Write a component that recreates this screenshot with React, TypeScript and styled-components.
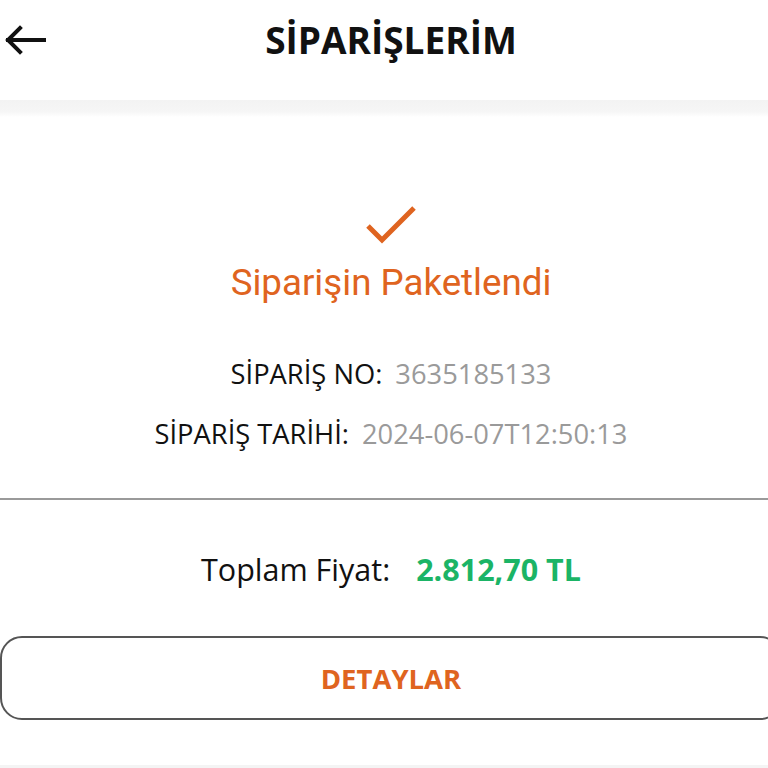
import React from "react";
import styled, { createGlobalStyle } from "styled-components";

const GlobalStyle = createGlobalStyle`
	html, body {
		margin: 0;
		padding: 0;
		background: #ffffff;
		overflow: hidden;
	}
	body {
		font-family: "Open Sans", "Liberation Sans", sans-serif;
		color: #111111;
	}
`;

const Page = styled.div`
	width: 768px;
	height: 768px;
	display: flex;
	flex-direction: column;
	background: #ffffff;
	overflow: hidden;
`;

const Header = styled.header`
	box-sizing: border-box;
	height: 100px;
	padding-bottom: 20px;
	display: grid;
	grid-template-columns: 60px 1fr 46px;
	align-items: center;
	background: #ffffff;
`;

const BackButton = styled.button`
	border: none;
	background: none;
	padding: 0 0 0 4px;
	height: 40px;
	display: flex;
	align-items: center;
	cursor: pointer;
	color: #111111;
`;

const Title = styled.h1`
	margin: 0;
	text-align: center;
	font-family: "Open Sans", sans-serif;
	font-weight: 700;
	font-size: 37px;
	line-height: 48px;
	color: #111111;
`;

const Shade = styled.div`
	height: 17px;
	background: linear-gradient(180deg, #f3f3f3 0%, #f6f6f6 70%, #ffffff 100%);
`;

/* the card runs a little past the right edge of the screen */
const Card = styled.section`
	flex: 1;
	margin-right: -14px;
	display: flex;
	flex-direction: column;
	align-items: center;
	padding-top: 86px;
	border-bottom: 3px solid #f4f4f4;
`;

const StatusIcon = styled.div`
	height: 42px;
	display: flex;
	align-items: center;
	justify-content: center;
`;

const Status = styled.h2`
	margin: 16px 0 0;
	font-family: Roboto, sans-serif;
	font-weight: 400;
	font-size: 36.7px;
	line-height: 44px;
	color: #df6420;
`;

const InfoRow = styled.div<{ $top: number }>`
	margin-top: ${({ $top }) => $top}px;
	display: flex;
	align-items: baseline;
	gap: 13px;
	font-size: 27.3px;
	line-height: 36px;
`;

const Label = styled.span`
	color: #111111;
`;

const Value = styled.span`
	color: #9a9a9a;
`;

const Divider = styled.hr`
	align-self: stretch;
	margin: 46px 0 0;
	border: none;
	border-top: 2px solid #9a9a9a;
`;

const TotalRow = styled.div`
	margin-top: 49px;
	display: flex;
	align-items: baseline;
	gap: 26px;
	font-size: 30.5px;
	line-height: 40px;
`;

const Price = styled.span`
	color: #1bb466;
	font-weight: 700;
`;

const DetailsButton = styled.button`
	align-self: stretch;
	margin-top: 47px;
	height: 84px;
	border: 2px solid #555555;
	border-radius: 22px;
	background: #ffffff;
	font-family: "Open Sans", sans-serif;
	font-weight: 700;
	font-size: 27.5px;
	color: #df6420;
	cursor: pointer;
`;

export default function App() {
	return (
		<Page>
			<GlobalStyle />
			<Header>
				<BackButton aria-label="Geri">
					<svg width="42" height="30" viewBox="0 0 42 30" fill="none">
						<path
							d="M40 15H4M16 3L4 15l12 12"
							stroke="#111"
							strokeWidth="4"
							strokeLinecap="square"
						/>
					</svg>
				</BackButton>
				<Title>SİPARİŞLERİM</Title>
				<span />
			</Header>
			<Shade />
			<Card>
				<StatusIcon>
					<svg width="52" height="40" viewBox="0 0 52 40" fill="none">
						<path
							d="M3 22l14 14L49 4"
							stroke="#df6420"
							strokeWidth="5"
						/>
					</svg>
				</StatusIcon>
				<Status>Siparişin Paketlendi</Status>
				<InfoRow $top={51}>
					<Label>SİPARİŞ NO:</Label>
					<Value>3635185133</Value>
				</InfoRow>
				<InfoRow $top={24}>
					<Label>SİPARİŞ TARİHİ:</Label>
					<Value>2024-06-07T12:50:13</Value>
				</InfoRow>
				<Divider />
				<TotalRow>
					<Label>Toplam Fiyat:</Label>
					<Price>2.812,70 TL</Price>
				</TotalRow>
				<DetailsButton>DETAYLAR</DetailsButton>
			</Card>
		</Page>
	);
}
